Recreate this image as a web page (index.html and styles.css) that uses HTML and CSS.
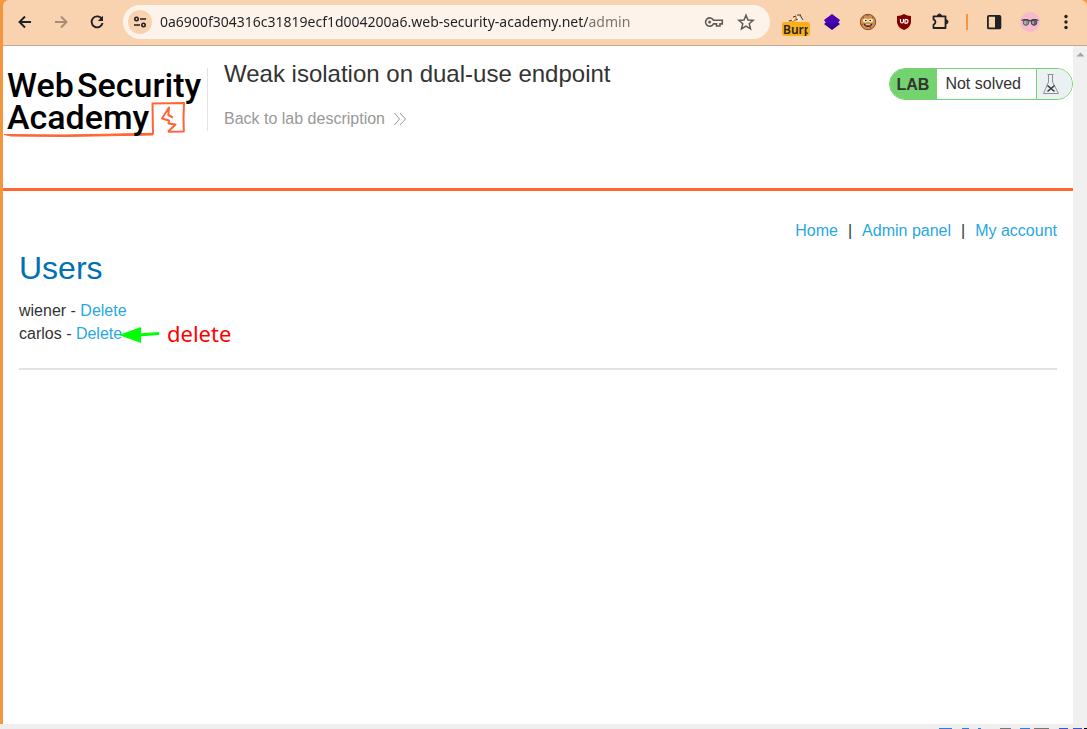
FILE: index.html
```html
<!DOCTYPE html>
<html lang="en">
<head>
<meta charset="utf-8">
<title>Weak isolation on dual-use endpoint</title>
<link rel="stylesheet" href="styles.css">
</head>
<body>
<div class="window">
  <header class="toolbar">
    <div class="nav-buttons">
      <button class="tool" aria-label="Back"><svg width="20" height="20" viewBox="0 0 20 20"><path d="M16 10H5M10 4.500L4.500 10l5.500 5.500" fill="none" stroke="#202124" stroke-width="1.900"/></svg></button>
      <button class="tool" aria-label="Forward" disabled><svg width="20" height="20" viewBox="0 0 20 20"><path d="M4 10h11M10 4.500l5.500 5.500-5.500 5.500" fill="none" stroke="#a58d79" stroke-width="1.900"/></svg></button>
      <button class="tool" aria-label="Reload"><svg width="20" height="20" viewBox="0 0 20 20"><path d="M15 7.300A5.500 5.500 0 1 0 15.500 11" fill="none" stroke="#202124" stroke-width="1.900"/><path d="M16 3.800V9h-5.200z" fill="#202124"/></svg></button>
    </div>
    <div class="address">
      <button class="site-info" aria-label="Site information"><svg width="16" height="16" viewBox="0 0 16 16" fill="none" stroke="#202124" stroke-width="1.600"><circle cx="4.500" cy="5" r="1.700"/><path d="M8 5h6M2 11h6"/><circle cx="11.500" cy="11" r="1.700"/></svg></button>
      <input class="url" type="text" aria-label="Address" value="0a6900f304316c31819ecf1d004200a6.web-security-academy.net/admin">
      <button class="tool" aria-label="Passwords"><svg width="20" height="20" viewBox="0 0 20 20" fill="none" stroke="#5f5a57" stroke-width="1.600"><path d="M9.500 8.200A4.200 4.200 0 1 0 9.500 11.900H12.500V14H16V11.900H18.300V8.200Z"/><circle cx="5.600" cy="10" r="1.500" fill="#5f5a57" stroke="none"/></svg></button>
      <button class="tool" aria-label="Bookmark"><svg width="20" height="20" viewBox="0 0 20 20"><path d="M10 3.200l2 4.800 5.200.4-4 3.400 1.300 5.100L10 14.200l-4.500 2.700 1.300-5.100-4-3.400L8 8z" fill="none" stroke="#5f5a57" stroke-width="1.500"/></svg></button>
    </div>
    <div class="extensions">
      <button class="tool burp" aria-label="Burp proxy"><svg width="24" height="12" viewBox="0 0 24 12"><path d="M4 9l8-5 2 3-4 3z" fill="#f5841f"/><path d="M5 8l7-3-3 4zM13 4l4 4-4 1z" fill="#fff"/><path d="M5 9l3-1M9 5l3-1M13 3h4M16 3l3 5M12 8l2-1" fill="none" stroke="#34404c"/></svg><span class="badge">Burp</span></button>
      <button class="tool" aria-label="Layers"><svg width="20" height="20" viewBox="0 0 20 20"><path d="M2 12l3-2.500h10l3 2.500-8 6z" fill="#30049c"/><path d="M10 2l8 6-8 6-8-6z" fill="#4b00b5"/><path d="M2.500 8.800L10 14.400l7.500-5.600" fill="none" stroke="#25107a"/></svg></button>
      <button class="tool" aria-label="Cookies"><svg width="20" height="20" viewBox="0 0 20 20"><circle cx="10" cy="10" r="7.700" fill="#d39150" stroke="#80502c"/><path d="M5 5l1 1M9 3l1 1M14 5l1 1M3.500 12l1 1M12 15l1 1" stroke="#8d552c" stroke-width="1.300"/><ellipse cx="7.500" cy="8.500" rx="2.500" ry="2" fill="#fff2ca"/><ellipse cx="12.500" cy="8.500" rx="2.500" ry="2" fill="#fff2ca"/><circle cx="7.800" cy="8.500" r=".8"/><circle cx="12.200" cy="8.500" r=".8"/><path d="M5.500 11.500q4.500 1.500 9 0-1 3.500-4.500 3.500t-4.500-3.500" fill="#4c170e"/><path d="M7.500 12.800h5" stroke="#fff"/></svg></button>
      <button class="tool" aria-label="uBlock"><svg width="20" height="20" viewBox="0 0 20 20"><path d="M10 2q3 2 7 2v6q0 5-7 8-7-3-7-8V4q4 0 7-2" fill="#800000"/><path d="M6.500 7v2.500q0 1.500 1.500 1.500t1.500-1.500V7M11 7.500v3.700q3 .3 3-1.900t-3-1.800" fill="none" stroke="#fff" stroke-width="1.200"/></svg></button>
      <button class="tool" aria-label="Extensions"><svg width="20" height="20" viewBox="0 0 20 20"><path d="M3.500 4.300h12V16h-12v-3.200q2-1 2-2.700t-2-2.700z" fill="none" stroke="#202124" stroke-width="1.800" stroke-linejoin="round"/><path d="M7.500 4a2 2 0 0 1 4 0zM16 7.800a2 2 0 0 1 0 4z" fill="#202124" stroke="#202124"/></svg></button>
      <span class="divider"></span>
      <button class="tool" aria-label="Side panel"><svg width="20" height="20" viewBox="0 0 20 20"><rect x="3.900" y="3.900" width="12.500" height="12.500" rx="1" fill="none" stroke="#202124" stroke-width="1.800"/><path d="M11 4h5.500v12.500H11z" fill="#202124"/></svg></button>
      <button class="tool" aria-label="Profile"><svg width="20" height="20" viewBox="0 0 20 20"><circle cx="10" cy="10" r="10" fill="#f8b9cc"/><ellipse cx="6" cy="10.500" rx="2.800" ry="2.800" fill="#8a9090" stroke="#555f60"/><ellipse cx="14" cy="10.500" rx="2.800" ry="2.800" fill="#606868" stroke="#3c4547"/><path d="M1.500 8.500Q6 6.500 10 9q4-2.500 8.500-.5" fill="none" stroke="#39413f" stroke-width="1.200"/><path d="M5 9v3M13 9v3" stroke="#c5c9c9"/></svg></button>
      <button class="tool" aria-label="Menu"><svg width="20" height="20" viewBox="0 0 20 20" fill="#202124"><circle cx="10" cy="4.500" r="1.700"/><circle cx="10" cy="10" r="1.700"/><circle cx="10" cy="15.500" r="1.700"/></svg></button>
    </div>
  </header>
  <div class="viewport">
    <div class="page">
      <section class="lab-header">
        <a class="logo" href="#" aria-label="Web Security Academy">
          <svg width="204" height="80" viewBox="0 0 204 80">
            <path class="underline" d="M1 70.500L62 71L150 69.300V71L62 72.500L8 72Z"/>
            <path class="logo-mark" d="M150 70L149.500 39.500L181 39L180.500 54L180.800 67.500L165 67.700M165 67.700L172.500 60.500L165.500 59.500L166 56.500L159 54.500L166 43.500L165.300 51L170 53.500"/>
            <g class="logo-text"><text x="4" y="33">Web</text><text x="74" y="33">Security</text><text x="4" y="65">Academy</text></g>
          </svg>
        </a>
        <div class="lab-title">
          <h2>Weak isolation on dual-use endpoint</h2>
          <a class="back" href="#">Back to lab description<svg width="12" height="14" viewBox="0 0 12 14"><path d="M.5 1l5 6-5 6M6 1l5.500 6L6 13" fill="none" stroke="#999"/></svg></a>
        </div>
        <div class="status"><strong>LAB</strong><span>Not solved</span>
          <i><svg width="18" height="22" viewBox="0 0 18 22"><path d="M5.500 1.500h6M6.500 2v7L1.500 20.500h15L10.500 9V2" fill="none" stroke="#8b9092"/><path d="M5.500 12.500l7 6M12.500 12.500l-7 6" stroke="#333" stroke-width="1.500"/></svg></i>
        </div>
      </section>
      <main>
        <nav class="links"><a href="#">Home</a><span>|</span><a href="#">Admin panel</a><span>|</span><a href="#">My account</a></nav>
        <h1>Users</h1>
        <div class="user"><span>wiener - </span><a href="#">Delete</a></div>
        <div class="user"><span>carlos - </span><a href="#">Delete</a>
          <div class="note"><svg width="42" height="18" viewBox="0 0 42 18"><path d="M20 9l20-1.500" stroke="#0f0" stroke-width="3"/><path d="M0 9L22 1v16z" fill="#0f0"/></svg><span>delete</span></div>
        </div>
        <hr>
      </main>
    </div>
    <div class="scrollbar"><svg width="14" height="16" viewBox="0 0 14 16"><path d="M3.500 10.500L7.500 6.500l4 4z" fill="#a3a3a3"/></svg></div>
  </div>
</div>
<footer class="desktop"><svg width="149" height="1" viewBox="0 0 149 1"><path d="M1 0h13v1H1zM24 0h7v1h-7zM40 0h3v1h-3zM82 0h10v1H82z" fill="#2f7de1"/><path d="M62 0h11v1H62zM96 0h15v1H96z" fill="#777"/><path d="M121 0h9v1h-9zM135 0h9v1h-9z" fill="#3d55cc"/><path d="M146 0h3v1h-3z"/></svg></footer>
</body>
</html>
```
FILE: styles.css
```css
* { box-sizing: border-box; }
body {
  margin: 0;
  min-height: 100vh;
  display: flex;
  flex-direction: column;
  background: #eee;
  color: #333332;
  font: 16px/23px "Liberation Sans", Arial, sans-serif;
}
button { border: 0; padding: 0; margin: 0; background: none; }
svg { display: block; }
a { color: #29a7df; text-decoration: none; }
h1, h2 { margin: 0; font-weight: 400; }

.window {
  flex: 1;
  display: flex;
  flex-direction: column;
  padding-left: 3px;
  background: #f3963e;
}
.toolbar {
  height: 46px;
  display: flex;
  align-items: center;
  padding: 0 11px 2px 12px;
  background: #f9d2af;
  border-bottom: 1px solid #c9a88c;
  border-radius: 6px 6px 0 0;
}
.tool { width: 20px; height: 20px; flex: none; }
.nav-buttons { display: flex; gap: 16px; }
.address {
  flex: 1;
  height: 34px;
  display: flex;
  align-items: center;
  gap: 12px;
  margin-left: 16px;
  padding: 0 14px 0 5px;
  border-radius: 17px;
  background: #fef3ea;
}
.site-info {
  flex: none;
  width: 24px;
  height: 24px;
  display: grid;
  place-items: center;
  border-radius: 50%;
  background: #f9d2af;
}
.url {
  flex: 1;
  min-width: 0;
  height: 24px;
  margin-left: -4px;
  padding: 0;
  border: 0;
  outline: 0;
  font: 14px "Noto Sans", sans-serif;
  background: linear-gradient(90deg, #202124 428px, #77706b 428px);
  background-clip: text;
  -webkit-background-clip: text;
  color: transparent;
}
.extensions { display: flex; align-items: center; gap: 16px; margin-left: 16px; }
.burp { position: relative; }
.burp svg { position: absolute; left: -2px; top: 0; }
.badge {
  position: absolute;
  left: -4px;
  top: 10px;
  width: 28px;
  height: 14px;
  overflow: hidden;
  border-right: 2px solid #fbaf17;
  border-left: 1px solid #fbaf17;
  border-radius: 3px;
  background: #fbaf17;
  color: #202124;
  font: 600 12px/16px "Noto Sans", sans-serif;
  text-align: left;
}
.divider { width: 2px; height: 16px; background: #f3963e; }

.viewport { flex: 1; display: flex; background: #fff; }
.page { flex: 1; min-width: 0; }
.scrollbar { width: 14px; background: #f0f0f0; }
.lab-header {
  height: 145px;
  display: flex;
  align-items: flex-start;
  border-bottom: 3px solid #ff6633;
}
.logo { margin-top: 18px; }
.logo-text { fill: #000; font: 500 34px Roboto, sans-serif; }
.logo-mark { fill: none; stroke: #ff6633; stroke-width: 2; stroke-linejoin: round; }
.underline { fill: #ff6633; stroke: #ff6633; }
.lab-title {
  flex: 1;
  min-height: 62px;
  margin-top: 22px;
  padding-left: 16px;
  border-left: 1px solid #e3e3e3;
}
.lab-title h2 { margin-top: -8px; font-size: 24px; line-height: 28px; }
.back {
  display: flex;
  align-items: center;
  gap: 9px;
  margin-top: 19px;
  line-height: 24px;
  color: #999;
}
.status {
  display: flex;
  height: 32px;
  margin-top: 22px;
  overflow: hidden;
  border: 1px solid #73d36f;
  border-radius: 16px;
  line-height: 30px;
}
.status strong { padding: 1px 8px 0 7px; background: #73d36f; }
.status span { padding: 0 15px 0 8px; }
.status i {
  width: 36px;
  padding: 4px 5px;
  border-left: 1px solid #73d36f;
  background: #ebf0f3;
}
main { padding: 28px 16px; }
.links { display: flex; justify-content: flex-end; gap: 10px; }
h1 { margin: 8px 0 13px; color: #0071b5; font-size: 32px; line-height: 36px; }
.user { position: relative; width: max-content; }
.user span { white-space: pre; }
.note {
  position: absolute;
  left: 100px;
  top: 0;
  display: flex;
  align-items: center;
  gap: 6px;
  color: #f00;
  font: 22px/22px "Noto Sans", sans-serif;
}
.note span { padding-bottom: 4px; }
hr { height: 2px; margin: 23px 0 0; border: 0; background: #e3e3e3; }
.desktop { height: 5px; display: flex; align-items: flex-end; justify-content: flex-end; }
```
